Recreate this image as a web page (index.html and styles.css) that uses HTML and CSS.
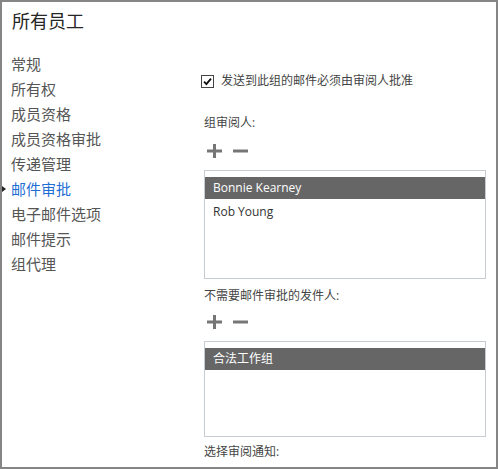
FILE: index.html
```html
<!DOCTYPE html>
<html lang="zh-CN">
<head>
<meta charset="utf-8">
<title>所有员工</title>
<link rel="stylesheet" href="styles.css">
</head>
<body>
<div class="frame">
  <h1 class="title">所有员工</h1>
  <div class="body">
    <nav class="nav">
      <ul class="nav-list">
        <li class="nav-item">常规</li>
        <li class="nav-item">所有权</li>
        <li class="nav-item">成员资格</li>
        <li class="nav-item">成员资格审批</li>
        <li class="nav-item">传递管理</li>
        <li class="nav-item nav-item-active">邮件审批</li>
        <li class="nav-item">电子邮件选项</li>
        <li class="nav-item">邮件提示</li>
        <li class="nav-item">组代理</li>
      </ul>
    </nav>
    <main class="content">
      <label class="check-row">
        <span class="checkbox">
          <svg viewBox="0 0 12 12" width="12" height="12"><path d="M2.2 6.2 L4.8 8.8 L9.8 2.8" fill="none" stroke="#111" stroke-width="2"/></svg>
        </span>
        <span class="check-text">发送到此组的邮件必须由审阅人批准</span>
      </label>

      <div class="field-label">组审阅人:</div>
      <div class="tools tools-first">
        <svg class="tool" viewBox="0 0 15 14" width="15" height="14"><path d="M0 7 H15 M7.5 0 V14" stroke="#767676" stroke-width="3"/></svg>
        <svg class="tool" viewBox="0 0 15 14" width="15" height="14"><path d="M0 7 H15" stroke="#767676" stroke-width="3"/></svg>
      </div>
      <div class="listbox listbox-tall">
        <div class="list-row list-row-selected">Bonnie Kearney</div>
        <div class="list-row">Rob Young</div>
      </div>

      <div class="field-label field-label-after">不需要邮件审批的发件人:</div>
      <div class="tools">
        <svg class="tool" viewBox="0 0 15 14" width="15" height="14"><path d="M0 7 H15 M7.5 0 V14" stroke="#767676" stroke-width="3"/></svg>
        <svg class="tool" viewBox="0 0 15 14" width="15" height="14"><path d="M0 7 H15" stroke="#767676" stroke-width="3"/></svg>
      </div>
      <div class="listbox listbox-short">
        <div class="list-row list-row-selected">合法工作组</div>
      </div>

      <div class="field-label field-label-last">选择审阅通知:</div>
    </main>
  </div>
</div>
</body>
</html>
```
FILE: styles.css
```css
html, body {
  margin: 0;
  padding: 0;
  background: #ffffff;
}

body {
  font-family: "Segoe UI", "Open Sans", "Noto Sans CJK SC", sans-serif;
  color: #444444;
}

.frame {
  box-sizing: border-box;
  width: 498px;
  height: 469px;
  border: 2px solid #858585;
  overflow: hidden;
  background: #ffffff;
}

.title {
  margin: 0;
  padding: 7px 0 0 10px;
  font-size: 18px;
  line-height: 24px;
  font-weight: normal;
  color: #262626;
}

.body {
  display: flex;
  margin-top: 19px;
}

.nav {
  width: 197px;
  flex: none;
}

.nav-list {
  list-style: none;
  margin: 0;
  padding: 0;
}

.nav-item {
  position: relative;
  padding-left: 9px;
  font-size: 15px;
  line-height: 25px;
  height: 25px;
  color: #555555;
}

.nav-item-active {
  color: #1f6ed4;
}

.nav-item-active::before {
  content: "";
  position: absolute;
  left: 0;
  top: 9px;
  border-left: 4px solid #222222;
  border-top: 3.5px solid transparent;
  border-bottom: 3.5px solid transparent;
}

.content {
  flex: 1;
  padding-left: 2px;
}

.check-row {
  display: flex;
  align-items: center;
  margin-top: 19px;
  height: 20px;
}

.checkbox {
  box-sizing: border-box;
  width: 13px;
  height: 13px;
  border: 1px solid #444444;
  display: flex;
  align-items: center;
  justify-content: center;
  background: #ffffff;
}

.checkbox svg {
  display: block;
  width: 11px;
  height: 11px;
}

.check-text {
  margin-left: 7px;
  font-size: 12px;
  line-height: 20px;
  color: #444444;
}

.field-label {
  margin-top: 23px;
  margin-left: 3px;
  font-size: 12px;
  line-height: 18px;
  color: #444444;
}

.field-label-after {
  margin-top: 8px;
}

.field-label-last {
  margin-top: 6px;
}

.tools {
  display: flex;
  gap: 11px;
  margin-top: 10px;
  margin-left: 6px;
  height: 14px;
}

.tools-first {
  margin-top: 12px;
}

.tool {
  display: block;
}

.listbox {
  box-sizing: border-box;
  margin-top: 12px;
  margin-left: 3px;
  width: 282px;
  border: 1px solid #c6ccd1;
  padding-top: 6px;
  background: #ffffff;
}

.listbox-tall {
  height: 109px;
}

.listbox-short {
  height: 96px;
}

.list-row {
  height: 22px;
  line-height: 22px;
  padding-left: 8px;
  margin-bottom: 2px;
  font-size: 12px;
  color: #333333;
}

.list-row-selected {
  background: #666666;
  color: #ffffff;
}
```
